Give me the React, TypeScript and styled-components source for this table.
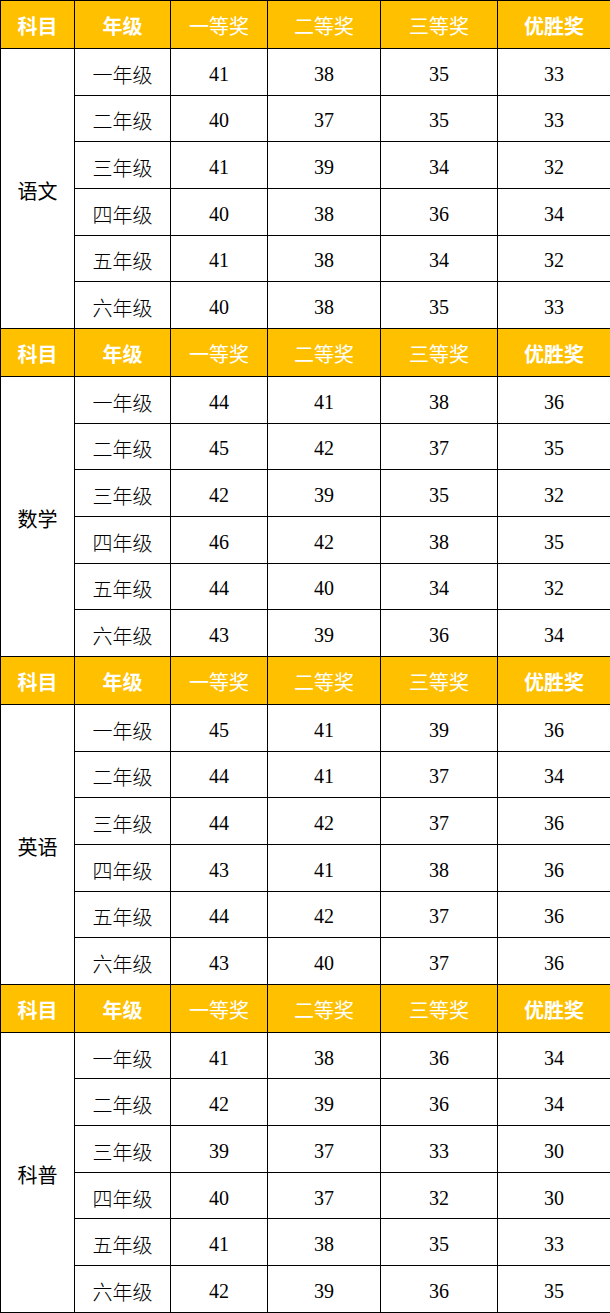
import React from 'react';
import styled, { createGlobalStyle } from 'styled-components';

const GlobalStyle = createGlobalStyle`
  html, body {
    margin: 0;
    padding: 0;
    background: #ffffff;
  }
`;

const Table = styled.table`
  width: 610px;
  border-collapse: collapse;
  table-layout: fixed;
  font-family: "Noto Sans CJK SC", "Liberation Sans", sans-serif;
`;

const HeaderRow = styled.tr`
  height: 48px;
  background: #ffc000;
`;

const HeadCell = styled.th<{ $bold?: boolean }>`
  border: 1px solid #000;
  padding: 2px 0 0;
  color: #ffffff;
  font-size: 20px;
  font-weight: ${p => (p.$bold ? 700 : 400)};
  text-align: center;
  vertical-align: middle;
`;

const DataRow = styled.tr`
  height: 46.67px;
`;

const Cell = styled.td`
  border: 1px solid #000;
  padding: 5px 0 0;
  color: #000;
  font-size: 20px;
  text-align: center;
  vertical-align: middle;
`;

const NumCell = styled(Cell)`
  font-family: "Liberation Serif", "Noto Sans CJK SC", serif;
  font-size: 20px;
`;

const GradeCell = styled(Cell)`
  font-weight: 300;
`;

const grades = ['一年级', '二年级', '三年级', '四年级', '五年级', '六年级'];

const sections: { subject: string; rows: number[][] }[] = [
  {
    subject: '语文',
    rows: [
      [41, 38, 35, 33],
      [40, 37, 35, 33],
      [41, 39, 34, 32],
      [40, 38, 36, 34],
      [41, 38, 34, 32],
      [40, 38, 35, 33],
    ],
  },
  {
    subject: '数学',
    rows: [
      [44, 41, 38, 36],
      [45, 42, 37, 35],
      [42, 39, 35, 32],
      [46, 42, 38, 35],
      [44, 40, 34, 32],
      [43, 39, 36, 34],
    ],
  },
  {
    subject: '英语',
    rows: [
      [45, 41, 39, 36],
      [44, 41, 37, 34],
      [44, 42, 37, 36],
      [43, 41, 38, 36],
      [44, 42, 37, 36],
      [43, 40, 37, 36],
    ],
  },
  {
    subject: '科普',
    rows: [
      [41, 38, 36, 34],
      [42, 39, 36, 34],
      [39, 37, 33, 30],
      [40, 37, 32, 30],
      [41, 38, 35, 33],
      [42, 39, 36, 35],
    ],
  },
];

const App: React.FC = () => {
  return (
    <>
      <GlobalStyle />
      <Table>
        <colgroup>
          <col style={{ width: 74 }} />
          <col style={{ width: 96 }} />
          <col style={{ width: 97 }} />
          <col style={{ width: 113 }} />
          <col style={{ width: 117 }} />
          <col style={{ width: 113 }} />
        </colgroup>
        <tbody>
          {sections.map(section => (
            <React.Fragment key={section.subject}>
              <HeaderRow>
                <HeadCell $bold>科目</HeadCell>
                <HeadCell $bold>年级</HeadCell>
                <HeadCell>一等奖</HeadCell>
                <HeadCell>二等奖</HeadCell>
                <HeadCell>三等奖</HeadCell>
                <HeadCell $bold>优胜奖</HeadCell>
              </HeaderRow>
              {section.rows.map((row, i) => (
                <DataRow key={i}>
                  {i === 0 && <Cell rowSpan={6}>{section.subject}</Cell>}
                  <GradeCell>{grades[i]}</GradeCell>
                  {row.map((n, j) => (
                    <NumCell key={j}>{n}</NumCell>
                  ))}
                </DataRow>
              ))}
            </React.Fragment>
          ))}
        </tbody>
      </Table>
    </>
  );
};

export default App;
